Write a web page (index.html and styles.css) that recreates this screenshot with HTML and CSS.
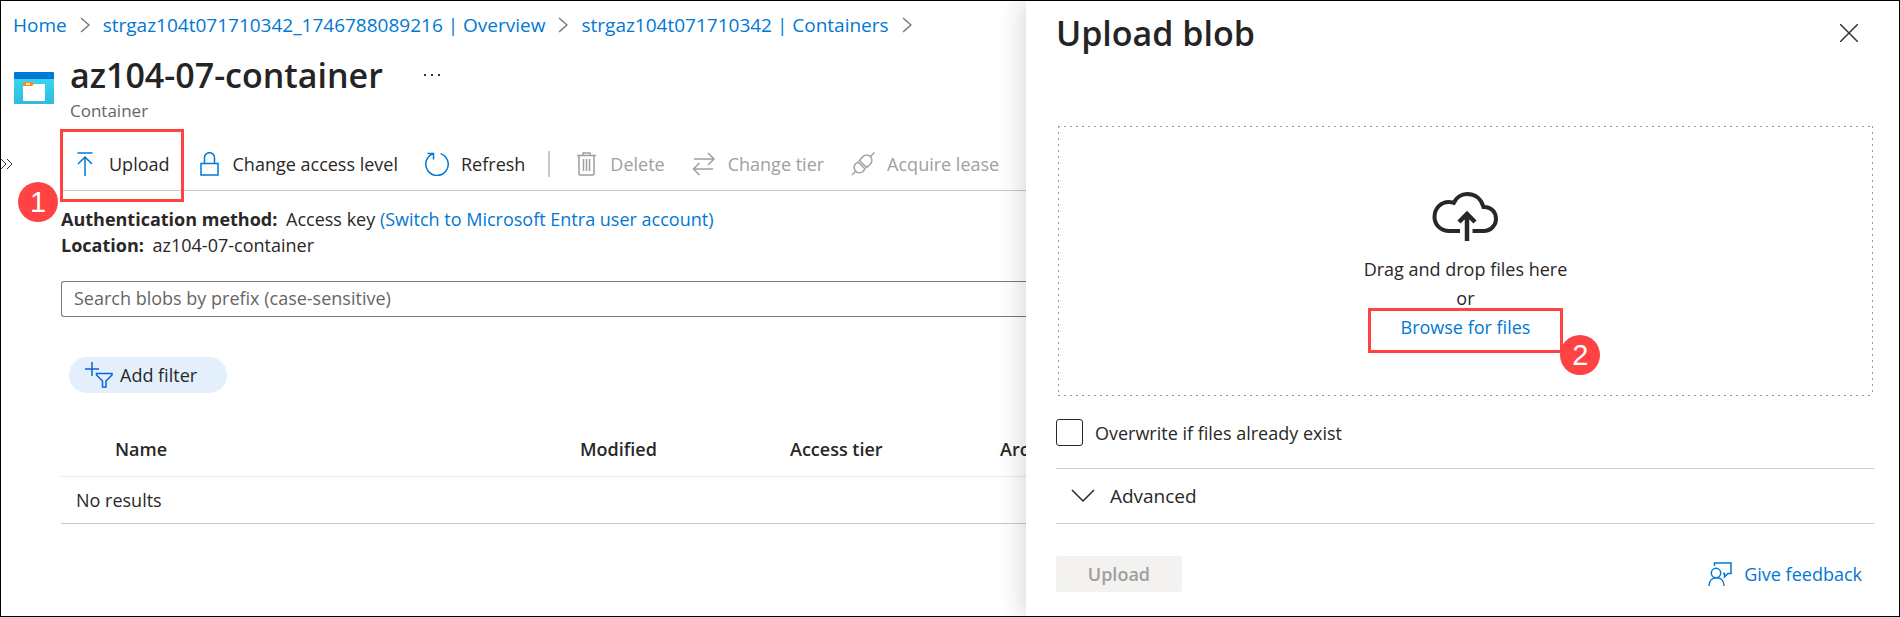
FILE: index.html
```html
<!DOCTYPE html>
<html lang="en">
<head>
<meta charset="utf-8">
<title>az104-07-container</title>
<link rel="stylesheet" href="styles.css">
</head>
<body>
<div class="app">
  <main class="main">
    <nav class="breadcrumb" aria-label="Breadcrumb">
      <a href="#">Home</a>
      <svg class="crumb-sep" viewBox="0 0 10 16"><path d="M1 1l8 7-8 7"/></svg>
      <a href="#">strgaz104t071710342_1746788089216 | Overview</a>
      <svg class="crumb-sep" viewBox="0 0 10 16"><path d="M1 1l8 7-8 7"/></svg>
      <a href="#">strgaz104t071710342 | Containers</a>
      <svg class="crumb-sep" viewBox="0 0 10 16"><path d="M1 1l8 7-8 7"/></svg>
    </nav>

    <header class="header">
      <svg class="header-icon" viewBox="0 0 40 32">
        <defs>
          <linearGradient id="sky" x1="0" y1="0" x2="0" y2="1"><stop offset="0" stop-color="#36d6f6"/><stop offset="1" stop-color="#31bbdd"/></linearGradient>
        </defs>
        <rect y="6" width="40" height="26" rx="1" fill="url(#sky)"/>
        <path d="M1 0h38a1 1 0 0 1 1 1v6H0V1a1 1 0 0 1 1-1z" fill="#0078d4"/>
        <path d="M9 12h22v16a1 1 0 0 1-1 1H10a1 1 0 0 1-1-1z" fill="#fff"/>
        <path d="M10 10h9l1 2-2 2H9v-3a1 1 0 0 1 1-1z" fill="#f78d1e"/>
        <path d="M12 12h4" stroke="#fff"/>
      </svg>
      <div class="header-text">
        <div class="title-row">
          <h1 class="title">az104-07-container</h1>
          <button class="more" aria-label="More"><svg viewBox="0 0 18 4"><path d="M1 1h2v2H1zM8 1h2v2H8zM15 1h2v2h-2z"/></svg></button>
        </div>
        <p class="subtitle">Container</p>
      </div>
    </header>

    <div class="body">
      <button class="expand" aria-label="Expand menu"><svg viewBox="0 0 12 14"><path d="M0 2l5 5-5 5M6 2l5 5-5 5"/></svg></button>
      <div class="content">
        <div class="toolbar">
          <div class="marked">
            <button class="tool"><svg viewBox="0 0 24 24"><path d="M4.500 1h15M12 24V5M5 12l7-7 7 7"/></svg>Upload</button>
            <span class="mark mark-upload"></span>
            <span class="badge badge-one">1</span>
          </div>
          <button class="tool"><svg viewBox="0 0 24 24"><path d="M4 11.500h17v11.500H4zM7.500 11V5.500a5 4.800 0 0 1 10 0V11"/></svg>Change access level</button>
          <button class="tool"><svg viewBox="0 0 24 24"><path d="M8.200 1.700A11.200 11.200 0 1 0 15.500 1.600M2.500 1.500h6v6"/></svg>Refresh</button>
          <span class="divider"></span>
          <button class="tool" disabled><svg viewBox="0 0 24 24"><path d="M3 3.500h19M9 3V1h7v2M5 4v18a1 1 0 0 0 1 1h13a1 1 0 0 0 1-1V4M9.500 7v12M12.500 7v12M15.500 7v12"/></svg>Delete</button>
          <button class="tool" disabled><svg viewBox="0 0 24 24"><path d="M2 7h20M16 1l6 6-6 6M21 17H1M7.500 11l-6 6 6 6"/></svg>Change tier</button>
          <button class="tool" disabled><svg viewBox="0 0 24 24"><path d="M1 23l4-4M19 5l4.500-4.500M8.500 8.500l7 7 3.500-3a6 6 0 0 0 .5-8 6 6 0 0 0-8 .5zM7 10l7 7-2 2.500a5.500 5.500 0 0 1-7.500-.5A5.500 5.500 0 0 1 4.500 12z"/></svg>Acquire lease</button>
          <button class="tool" disabled aria-label="Break lease"><svg viewBox="0 0 24 24"><path d="M1 23l5-5M2 16l7 7"/></svg></button>
        </div>

        <div class="info">
          <p><b>Authentication method:</b> <span class="value">Access key <a href="#">(Switch to Microsoft Entra user account)</a></span></p>
          <p><b>Location:</b> <span class="value">az104-07-container</span></p>
        </div>

        <input class="search" type="text" aria-label="Search blobs" placeholder="Search blobs by prefix (case-sensitive)">

        <button class="filter"><svg viewBox="0 0 28 26"><path d="M0 7h14M7 0v14M11.500 11.500h15.500v1.500l-6 6v6h-3.500v-6l-6-6z"/></svg>Add filter</button>

        <table class="blobs">
          <thead><tr><th class="col-name">Name</th><th>Modified</th><th>Access tier</th><th>Archive status</th></tr></thead>
          <tbody><tr><td colspan="4">No results</td></tr></tbody>
        </table>
      </div>
    </div>
  </main>

  <aside class="panel">
    <div class="panel-head">
      <h2 class="title">Upload blob</h2>
      <button class="close" aria-label="Close"><svg viewBox="0 0 18 18"><path d="M0 0l18 18M18 0L0 18"/></svg></button>
    </div>

    <div class="dropzone">
      <svg class="cloud" viewBox="0 0 66 50"><path d="M28 39H17.500C8 39 2.500 32 2.500 25c0-9 7-15.500 15-15 2 0 3 .3 4.300.8C24 6 29 2 35 2c9 0 14.500 5.500 16.500 13C59 14.500 64 20 64 27c0 6-5 12-12.500 12H40.500"/><path d="M35 49V22M27 30l8-8 8 8" stroke-width="4.500"/></svg>
      <p>Drag and drop files here</p>
      <p>or</p>
      <div class="marked">
        <a href="#">Browse for files</a>
        <span class="mark mark-browse"></span>
        <span class="badge badge-two">2</span>
      </div>
    </div>

    <label class="overwrite"><input type="checkbox">Overwrite if files already exist</label>

    <button class="advanced"><svg viewBox="0 0 24 14"><path d="M1 1l11 11L23 1"/></svg>Advanced</button>

    <div class="panel-foot">
      <button class="upload" disabled>Upload</button>
      <a class="feedback" href="#"><svg viewBox="0 0 24 24"><path d="M6.500 4V1H23v10.500h-3L16.500 15v-3.500H15"/><circle cx="8" cy="11" r="4.700"/><path d="M1 24c0-5 3-8.200 7.500-8.200S16 19 16 24"/></svg>Give feedback</a>
    </div>
  </aside>
</div>
</body>
</html>
```
FILE: styles.css
```css
* { box-sizing: border-box; }

body {
  margin: 0;
  font-family: "Open Sans", "Noto Sans", sans-serif;
  font-size: 18px;
  line-height: 26px;
  color: #292827;
  background: #fff;
}

h1, h2, p { margin: 0; }

a { color: #0078d4; text-decoration: none; }

button {
  font: inherit;
  color: inherit;
  background: none;
  border: 0;
  padding: 0;
  cursor: pointer;
}

svg { display: block; flex: none; fill: none; stroke: currentColor; stroke-width: 1.5; }

.app {
  display: flex;
  min-height: 100vh;
  border: 1px solid #000;
  overflow: hidden;
}

/* Container page */
.main { flex: 1; min-width: 0; overflow: hidden; }

.breadcrumb {
  display: flex;
  align-items: center;
  gap: 13px;
  padding: 11px 12px 0;
  font-size: 19px;
  white-space: nowrap;
}

.crumb-sep { width: 10px; height: 16px; color: #777; }

.header { display: flex; gap: 16px; padding: 14px 13px 0; }

.header-icon { width: 40px; height: 32px; margin-top: 20px; stroke: none; }

.title-row { display: flex; align-items: center; gap: 40px; }

.title { font-size: 34px; line-height: 46px; font-weight: 600; color: #242424; }

.more svg { width: 18px; height: 4px; fill: #333; stroke: none; }

.subtitle { font-size: 17px; color: #666; }

.body { display: flex; align-items: flex-start; }

.expand { width: 60px; flex: none; margin-top: 33px; color: #333; }

.expand svg { width: 12px; height: 14px; stroke-width: 1; }

.content { flex: 1; min-width: 0; padding-top: 10px; }

.toolbar {
  display: flex;
  align-items: center;
  height: 57px;
  padding-top: 3px;
  border-bottom: 1px solid #c8c8c8;
  white-space: nowrap;
}

.tool { display: flex; align-items: center; gap: 12px; padding: 0 15px 0 12px; }

.tool svg { width: 24px; height: 24px; color: #0078d4; }

.tool:disabled, .tool:disabled svg { color: #a19f9d; }

.divider { width: 2px; height: 26px; flex: none; margin: 0 12px 0 8px; background: #c8c8c8; }

.info { padding-top: 15px; }

.info b { font-weight: 700; }

.value { margin-left: 4px; }

.search {
  display: block;
  width: 100%;
  height: 36px;
  margin-top: 23px;
  padding: 0 12px 2px;
  font: inherit;
  border: 1px solid #7a7a7a;
  border-right: 0;
  border-radius: 3px 0 0 3px;
}

.search::placeholder { color: #666; opacity: 1; }

.filter {
  display: flex;
  align-items: center;
  gap: 7px;
  height: 36px;
  margin: 40px 8px 0;
  padding: 0 30px 0 16px;
  border-radius: 18px;
  background: #e3f0fb;
}

.filter svg { width: 28px; height: 26px; color: #0f5fd7; }

.blobs {
  width: 100%;
  margin-top: 30px;
  border-collapse: collapse;
  table-layout: fixed;
  white-space: nowrap;
}

.blobs th {
  width: 210px;
  height: 53px;
  padding: 0;
  text-align: left;
  font-weight: 600;
  border-bottom: 1px solid #e8e8e8;
}

.blobs th:last-child { width: auto; }

.blobs .col-name { width: 519px; padding-left: 54px; }

.blobs td { height: 47px; padding: 0 15px; border-bottom: 1px solid #c8c8c8; }

/* Upload side panel */
.panel {
  display: flex;
  flex-direction: column;
  width: 46%;
  flex: none;
  padding: 9px 25px 22px 30px;
  background: #fff;
  box-shadow: 0 0 28px rgba(0, 0, 0, .2);
  position: relative;
}

.panel-head { display: flex; justify-content: space-between; align-items: center; }

.close { padding: 12px 16px; color: #333; }

.close svg { width: 18px; height: 18px; }

.dropzone {
  display: flex;
  flex-direction: column;
  align-items: center;
  height: 270px;
  margin: 70px 1px 0 2px;
  padding-top: 66px;
  line-height: 29px;
  background:
    repeating-linear-gradient(90deg, #999 0 2px, transparent 2px 6px) top / 100% 1px no-repeat,
    repeating-linear-gradient(90deg, #999 0 2px, transparent 2px 6px) bottom / 100% 1px no-repeat,
    repeating-linear-gradient(#999 0 2px, transparent 2px 6px) left / 1px 100% no-repeat,
    repeating-linear-gradient(#999 0 2px, transparent 2px 6px) right / 1px 100% no-repeat;
}

.cloud { width: 66px; height: 50px; margin-bottom: 13px; stroke-width: 4; }

.overwrite { display: flex; align-items: center; gap: 12px; margin-top: 23px; }

.overwrite input {
  appearance: none;
  width: 27px;
  height: 27px;
  margin: 0;
  border: 1px solid #292827;
  border-radius: 3px;
}

.advanced {
  display: flex;
  align-items: center;
  gap: 15px;
  height: 56px;
  margin-top: 22px;
  padding: 0 15px;
  border: solid #d0d0d0;
  border-width: 1px 0;
  font-size: 19px;
}

.advanced svg { width: 24px; height: 14px; }

.panel-foot {
  display: flex;
  justify-content: space-between;
  align-items: center;
  margin-top: 32px;
}

.upload {
  width: 126px;
  height: 36px;
  border-radius: 3px;
  background: #f3f2f1;
  color: #a19f9d;
  font-weight: 600;
}

.feedback { display: flex; align-items: center; gap: 12px; padding-right: 12px; }

.feedback svg { width: 24px; height: 24px; }

/* Step markers laid over the controls */
.marked { position: relative; }

.mark { position: absolute; border: 3px solid #ff4343; pointer-events: none; }

.mark-upload { top: -22px; bottom: -25px; left: -1px; right: 1px; }

.mark-browse { top: -5px; bottom: -11px; left: -33px; right: -33px; }

.badge {
  position: absolute;
  width: 40px;
  height: 40px;
  border-radius: 50%;
  background: #ff4343;
  color: #fff;
  font: 29px/40px "Liberation Sans", Arial, sans-serif;
  text-align: center;
}

.badge-one { top: 31px; left: -43px; z-index: 1; }

.badge-two { top: 22px; right: -70px; }
```
